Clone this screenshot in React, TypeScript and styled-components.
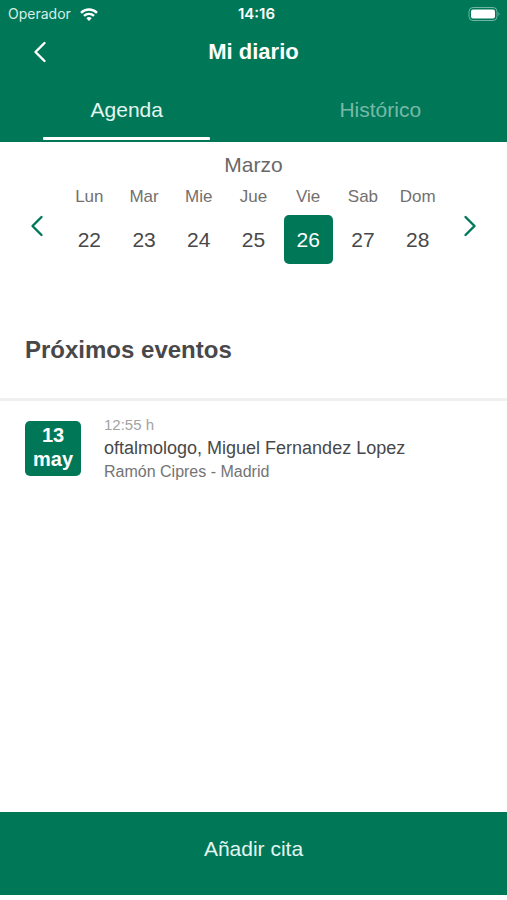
import React, { useState } from "react";
import styled, { createGlobalStyle } from "styled-components";

const green = "#007858";

const GlobalStyle = createGlobalStyle`
  * { box-sizing: border-box; }
  body {
    margin: 0;
    background: #fff;
    color: #48484a;
    font-family: "Liberation Sans", Arial, sans-serif;
  }
  h1, h2, p { margin: 0; }
`;

const Button = styled.button`
  border: 0;
  padding: 0;
  background: none;
  font-family: inherit;
  cursor: pointer;
`;

const Screen = styled.div`
  display: flex;
  flex-direction: column;
  min-height: 100vh;
  padding-bottom: 5px;
`;

const Header = styled.header`
  background: ${green};
  color: #fff;
`;

const StatusBar = styled.div`
  display: grid;
  grid-template-columns: 1fr auto 1fr;
  align-items: center;
  height: 28px;
  padding: 0 6px 0 8px;
  font: 14px/28px Inter, sans-serif;
`;

const Carrier = styled.div`
  display: flex;
  align-items: center;
  gap: 9px;
  color: #d5eee6;
`;

const Clock = styled.time`
  padding-left: 4px;
  font-size: 15px;
  font-weight: 600;
`;

const Battery = styled.svg`
  justify-self: end;
`;

const TitleBar = styled.div`
  display: grid;
  grid-template-columns: 48px 1fr 48px;
  align-items: center;
  height: 48px;
  padding: 0 16px;
`;

const Title = styled.h1`
  text-align: center;
  font-size: 22px;
  line-height: 28px;
`;

const IconButton = styled(Button)`
  display: flex;
  align-items: center;
  justify-content: center;
  height: 48px;
  color: inherit;
`;

const Tabs = styled.div`
  display: grid;
  grid-template-columns: 1fr 1fr;
  height: 66px;
`;

const Tab = styled(Button)<{ $active: boolean }>`
  display: flex;
  flex-direction: column;
  align-items: center;
  justify-content: space-between;
  padding: 22px 0 2px;
  font-size: 21px;
  line-height: 24px;
  color: ${(p) => (p.$active ? "#e4f6f0" : "#78b8a7")};

  &::after {
    content: "";
    width: 66%;
    height: 3px;
    border-radius: 1px;
    background: ${(p) => (p.$active ? "#fff" : "transparent")};
  }
`;

const Calendar = styled.section`
  padding: 11px 12px 0;
`;

const Month = styled.h2`
  text-align: center;
  font-size: 21px;
  font-weight: 400;
  line-height: 24px;
  color: #6a6867;
`;

const Week = styled.div`
  display: grid;
  grid-template-columns: 50px 1fr 50px;
  color: ${green};
`;

const WeekArrow = styled(IconButton)`
  margin-top: 25px;
`;

const Days = styled.div`
  display: grid;
  grid-template-columns: repeat(7, 1fr);
  justify-items: center;
  padding-top: 10px;
`;

const Day = styled.div`
  display: flex;
  flex-direction: column;
  align-items: center;
  gap: 8px;
  font-size: 17px;
  line-height: 20px;
  color: #73706f;
`;

const DayNumber = styled(Button)<{ $selected: boolean }>`
  width: 49px;
  height: 49px;
  border-radius: 5px;
  font-size: 21px;
  color: ${(p) => (p.$selected ? "#fff" : "#48484a")};
  background: ${(p) => (p.$selected ? green : "transparent")};
`;

const Events = styled.main`
  flex: 1;
  padding-top: 70px;
`;

const SectionTitle = styled.h2`
  padding: 0 25px 32px;
  border-bottom: 3px solid #f0f0f0;
  font-size: 24px;
  line-height: 32px;
`;

const Event = styled.article`
  display: flex;
  gap: 23px;
  padding: 15px 25px;
`;

const DateBadge = styled.time`
  display: flex;
  flex-direction: column;
  align-items: center;
  width: 56px;
  height: 55px;
  margin-top: 5px;
  padding-top: 2px;
  border-radius: 5px;
  background: ${green};
  color: #fff;
  font-size: 20px;
  font-weight: 700;
  line-height: 24px;
`;

const EventTime = styled.p`
  font-size: 15px;
  line-height: 18px;
  color: #a3a3a3;
`;

const EventName = styled.p`
  font-size: 18px;
  line-height: 28px;
`;

const EventPlace = styled.p`
  font-size: 16px;
  line-height: 20px;
  color: #747474;
`;

const AddButton = styled(Button)`
  height: 83px;
  padding-bottom: 10px;
  background: ${green};
  color: #e4f6f0;
  font-size: 21px;
`;

function Chevron({ right = false }: { right?: boolean }) {
  return (
    <svg width="14" height="22" viewBox="0 0 14 22" fill="none" stroke="currentColor" strokeWidth="2.4" strokeLinecap="round" strokeLinejoin="round" aria-hidden="true">
      <path d={right ? "M2.5 2 L11.5 11 L2.5 20" : "M11.5 2 L2.5 11 L11.5 20"} />
    </svg>
  );
}

const days = [
  ["Lun", 22],
  ["Mar", 23],
  ["Mie", 24],
  ["Jue", 25],
  ["Vie", 26],
  ["Sab", 27],
  ["Dom", 28],
] as const;

export default function App() {
  const [tab, setTab] = useState("Agenda");
  const [selected, setSelected] = useState<number>(26);

  return (
    <Screen>
      <GlobalStyle />
      <Header>
        <StatusBar>
          <Carrier>
            Operador
            <svg width="18" height="13" viewBox="0 0 18 13" fill="none" stroke="#fff" strokeWidth="2.4" aria-hidden="true">
              <path d="M1 4.8 A11.5 11.5 0 0 1 17 4.8" />
              <path d="M4 7.9 A7.2 7.2 0 0 1 14 7.9" />
              <path d="M6.3 10.2 A4 4 0 0 1 11.7 10.2 L9 13 Z" fill="#fff" stroke="none" />
            </svg>
          </Carrier>
          <Clock>14:16</Clock>
          <Battery width="33" height="14" viewBox="0 0 33 14" aria-hidden="true">
            <rect x="1" y="0.5" width="28" height="13" rx="4" fill="none" stroke="#70b5a3" />
            <rect x="3" y="2.5" width="24" height="9" rx="2" fill="#fff" />
            <path d="M30.5 5 Q32.5 7 30.5 9 Z" fill="#70b5a3" />
          </Battery>
        </StatusBar>
        <TitleBar>
          <IconButton aria-label="Volver"><Chevron /></IconButton>
          <Title>Mi diario</Title>
        </TitleBar>
        <Tabs role="tablist">
          {["Agenda", "Histórico"].map((name) => (
            <Tab key={name} role="tab" aria-selected={tab === name} $active={tab === name} onClick={() => setTab(name)}>
              {name}
            </Tab>
          ))}
        </Tabs>
      </Header>
      <Calendar>
        <Month>Marzo</Month>
        <Week>
          <WeekArrow aria-label="Semana anterior"><Chevron /></WeekArrow>
          <Days>
            {days.map(([name, number]) => (
              <Day key={number}>
                <span>{name}</span>
                <DayNumber aria-label={`${name} ${number}`} aria-pressed={selected === number} $selected={selected === number} onClick={() => setSelected(number)}>
                  {number}
                </DayNumber>
              </Day>
            ))}
          </Days>
          <WeekArrow aria-label="Semana siguiente"><Chevron right /></WeekArrow>
        </Week>
      </Calendar>
      <Events>
        <SectionTitle>Próximos eventos</SectionTitle>
        <Event>
          <DateBadge>
            <span>13</span>
            <span>may</span>
          </DateBadge>
          <div>
            <EventTime>12:55 h</EventTime>
            <EventName>oftalmologo, Miguel Fernandez Lopez</EventName>
            <EventPlace>Ramón Cipres - Madrid</EventPlace>
          </div>
        </Event>
      </Events>
      <AddButton>Añadir cita</AddButton>
    </Screen>
  );
}
